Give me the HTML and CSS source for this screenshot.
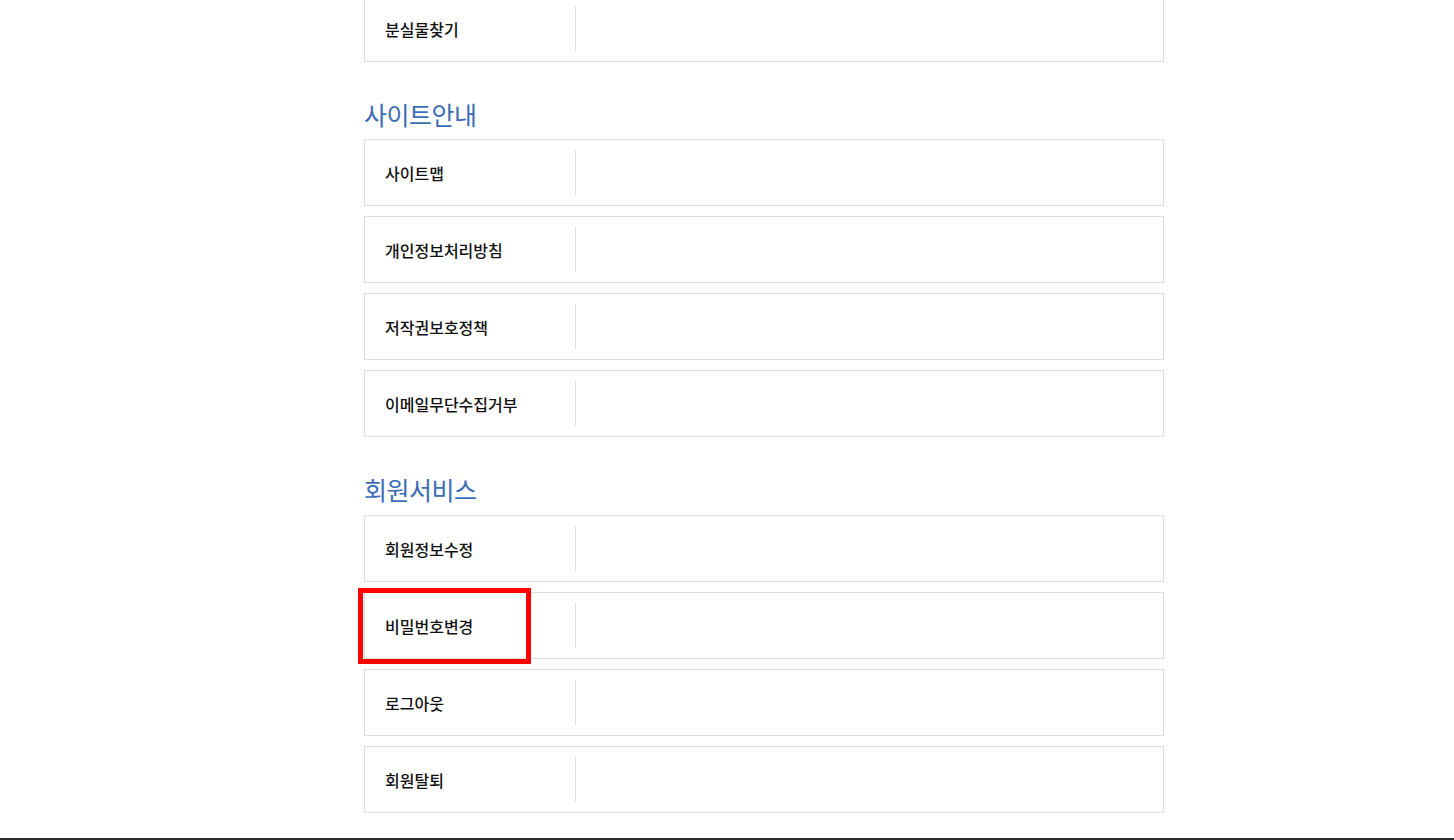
FILE: index.html
```html
<!DOCTYPE html>
<html lang="ko">
<head>
    <meta charset="utf-8">
    <title>사이트맵</title>
    <link rel="stylesheet" href="styles.css">
</head>
<body>

<div class="wrap">
    <main class="sitemap">

        <ul class="menu-list first">
            <li class="menu-item">
                <span class="menu-name">분실물찾기</span>
                <span class="menu-sub"></span>
            </li>
        </ul>

        <h2 class="group-title">사이트안내</h2>
        <ul class="menu-list">
            <li class="menu-item">
                <span class="menu-name">사이트맵</span>
                <span class="menu-sub"></span>
            </li>
            <li class="menu-item">
                <span class="menu-name">개인정보처리방침</span>
                <span class="menu-sub"></span>
            </li>
            <li class="menu-item">
                <span class="menu-name">저작권보호정책</span>
                <span class="menu-sub"></span>
            </li>
            <li class="menu-item">
                <span class="menu-name">이메일무단수집거부</span>
                <span class="menu-sub"></span>
            </li>
        </ul>

        <h2 class="group-title member">회원서비스</h2>
        <ul class="menu-list">
            <li class="menu-item">
                <span class="menu-name">회원정보수정</span>
                <span class="menu-sub"></span>
            </li>
            <li class="menu-item">
                <span class="menu-name">비밀번호변경</span>
                <span class="menu-sub"></span>
                <!-- 강조 표시 -->
                <span class="highlight"></span>
            </li>
            <li class="menu-item">
                <span class="menu-name">로그아웃</span>
                <span class="menu-sub"></span>
            </li>
            <li class="menu-item">
                <span class="menu-name">회원탈퇴</span>
                <span class="menu-sub"></span>
            </li>
        </ul>

    </main>
</div>

<footer class="footer"></footer>

</body>
</html>
```

FILE: styles.css
```css
/* CSS */
html, body {
    margin: 0;
    padding: 0;
    background: #fff;
    font-family: "Noto Sans CJK KR", "Noto Sans", sans-serif;
    color: #111;
    overflow: hidden;
}

.wrap {
    width: 874px;
    margin: 0 auto;
}

.sitemap {
    width: 800px;
    margin-left: 74px;
    padding-bottom: 15px;
}

.menu-list {
    list-style: none;
    margin: 0;
    padding: 0;
}

.menu-list.first {
    margin-top: -5px;
}

.menu-item {
    position: relative;
    display: flex;
    box-sizing: border-box;
    height: 67px;
    margin-bottom: 10px;
    border: 1px solid #dcdcdc;
    background: #fff;
}

.menu-name {
    display: flex;
    align-items: center;
    box-sizing: border-box;
    width: 211px;
    margin: 10px 0;
    padding-left: 20px;
    border-right: 1px solid #dcdcdc;
    font-size: 16px;
    font-weight: 500;
    line-height: 20px;
    color: #111;
}

.menu-sub {
    flex: 1;
}

/* li 의 margin-bottom 10px 과 겹침 */
.group-title {
    margin: 38px 0 11px 0;
    font-size: 25px;
    line-height: 28px;
    font-weight: normal;
    color: #3b6cb5;
    letter-spacing: -0.5px;
}

.group-title.member {
    margin-bottom: 12px;
}

.highlight {
    position: absolute;
    top: -5px;
    left: -7px;
    box-sizing: border-box;
    width: 173px;
    height: 76px;
    border: 5px solid #ff0000;
}

.footer {
    height: 2px;
    background: #2b2b2b;
}
```
